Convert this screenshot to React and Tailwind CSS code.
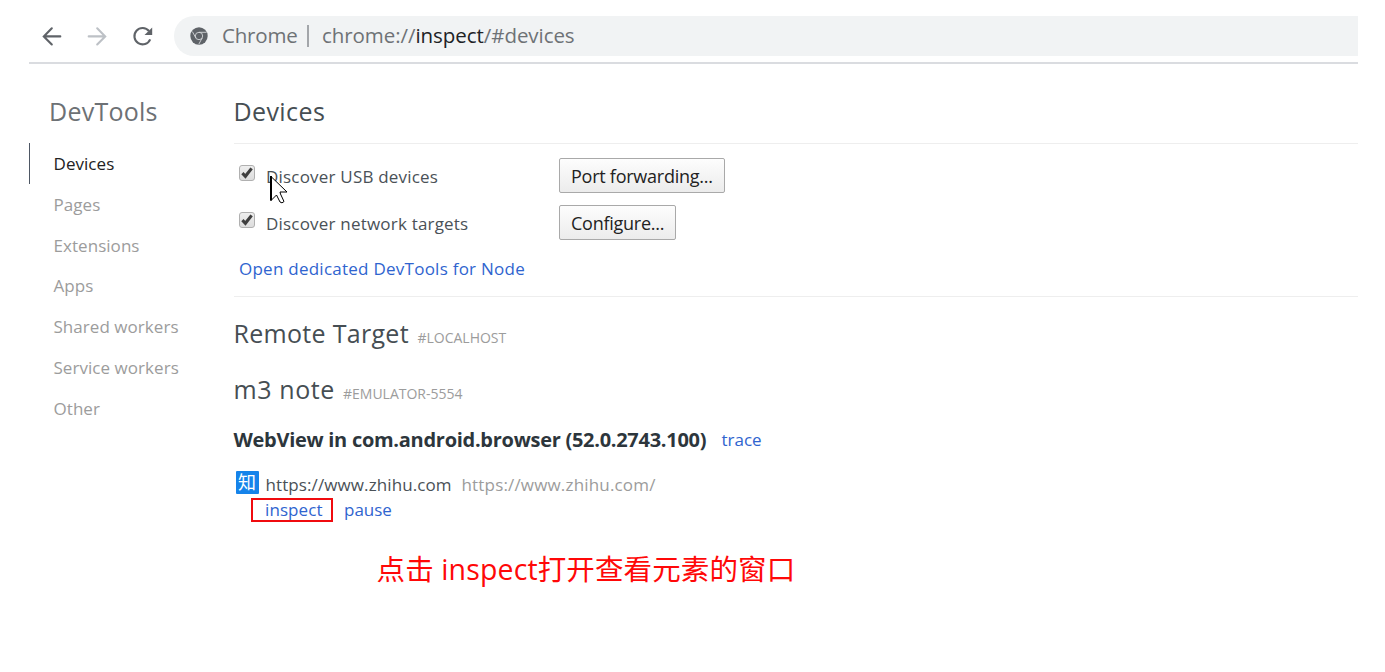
import React, { useState } from 'react'

const tabs = ['Devices', 'Pages', 'Extensions', 'Apps', 'Shared workers', 'Service workers', 'Other']

function ChromeLogo() {
  return (
    <svg viewBox="0 0 18 18" className="ml-[16px] h-[18px] w-[18px]">
      <circle cx="9" cy="9" r="8.7" fill="#5f6368" />
      <g fill="none" stroke="#d5d7d9" strokeWidth="0.9">
        <circle cx="9" cy="9" r="3.7" />
        <path d="M9 5.3h7.600M5.8 10.9L2.400 4.6M12.2 10.9L8.800 17.2" />
      </g>
    </svg>
  )
}

function AddressBar() {
  return (
    <header className="ml-[29px] mr-[27px] flex h-[64px] items-start border-b-2 border-[#dadce0] pt-[16px]">
      <div className="flex h-[40px] w-[145px] shrink-0 items-center pl-[13px]">
        <svg viewBox="0 0 20 20" className="h-[20px] w-[20px]" fill="none" stroke="#5f6368" strokeWidth="2.1" strokeLinecap="round">
          <path d="M18.3 10.400H2.4M9.8 2.3L1.8 10.4l8 8.1" />
        </svg>
        <svg viewBox="0 0 20 20" className="ml-[25px] h-[20px] w-[20px]" fill="none" stroke="#bdc1c6" strokeWidth="2.1" strokeLinecap="round">
          <path d="M1.7 10.4h15.9M10.2 2.3l8 8.1-8 8.1" />
        </svg>
        <svg viewBox="0 0 22 22" className="ml-[25px] h-[22px] w-[22px]">
          <path d="M18.2 14.3A8.2 8.2 0 1 1 17 6" fill="none" stroke="#5f6368" strokeWidth="2.1" />
          <path d="M20.2 2.4v7.700h-7.700z" fill="#5f6368" />
        </svg>
      </div>
      <div className="flex h-[40px] flex-1 items-center rounded-l-full bg-[#f1f3f4] text-[20.5px] text-[#6e7276]">
        <ChromeLogo />
        <span className="-mt-px ml-[14px] w-[85px] tracking-[-0.2px]">Chrome</span>
        <span className="h-[22px] w-[2px] bg-[#a3a6aa]" />
        <span className="-mt-px ml-[13px] tracking-[-0.06px]">
          chrome://<span className="text-[#202124]">inspect</span>/#devices
        </span>
      </div>
    </header>
  )
}

function Checkbox({ checked, onChange, label }) {
  return (
    <label className="flex w-[320px] items-center">
      <input type="checkbox" className="sr-only" checked={checked} onChange={onChange} />
      <span className="-mt-[5px] flex h-[16px] w-[16px] items-center justify-center rounded-[3px] border border-[#b0b0b0] bg-linear-to-b from-[#eeeeee] to-[#dddddd]">
        {checked && (
          <svg viewBox="0 0 14 14" className="h-[14px] w-[14px]" fill="none" stroke="#3f3f3f" strokeWidth="3.1">
            <path d="M2.4 7.2l3 3.1L11.6 2.4" />
          </svg>
        )}
      </span>
      <span className="ml-[11px] mt-[3px] tracking-[0.2px]">{label}</span>
    </label>
  )
}

function Button({ children }) {
  return (
    <button className="h-[35px] rounded-[2px] border border-[#a9a9a9] bg-linear-to-b from-[#fdfdfd] to-[#ececec] px-[11px] pt-[2px] text-[18px] tracking-[-0.25px] text-[#222]">
      {children}
    </button>
  )
}

function Cursor() {
  return (
    <svg viewBox="0 0 18 29" className="absolute left-[36px] top-[31px] h-[29px] w-[18px]">
      <path d="M1 1.500v24l5.500-5.500 3.500 7q2 2 4-.5L10.500 19l-.5-2h7z" fill="#fff" stroke="#000" strokeWidth="1" />
      <path d="M1 1v24.500" stroke="#000" strokeWidth="2" />
    </svg>
  )
}

export default function App() {
  const [active, setActive] = useState('Devices')
  const [usb, setUsb] = useState(true)
  const [network, setNetwork] = useState(true)

  return (
    <div className="h-[672px] w-[1385px] overflow-hidden bg-white font-['Open_Sans','Noto_Sans_CJK_SC',sans-serif] text-[17px] text-[#4a5157]">
      <AddressBar />

      <div className="flex pl-[29px] pr-[27px]">
        <nav className="w-[204.5px] shrink-0">
          <h1 className="h-[79px] pl-[20px] pt-[30px] text-[25px] leading-[34px] tracking-[0.25px] text-[#6d7175]">DevTools</h1>
          {tabs.map(tab => (
            <button
              key={tab}
              onClick={() => setActive(tab)}
              className={`block h-[40.75px] w-full border-l pl-[23.5px] pt-px text-left tracking-[0.05px] ${
                tab === active ? 'border-[#4e5764] text-[#222]' : 'border-transparent text-[#9c9c9c]'
              }`}
            >
              {tab}
            </button>
          ))}
        </nav>

        <main className="min-w-0 flex-1">
          <h2 className="h-[80px] border-b border-[#eeeeee] pt-[30px] text-[25px] leading-[34px] tracking-[0.4px] text-[#464e53]">Devices</h2>

          <section className="relative h-[153px] border-b border-[#eeeeee] pl-[5.5px] pt-[14px]">
            <div className="flex h-[35px] items-center">
              <Checkbox checked={usb} onChange={() => setUsb(!usb)} label="Discover USB devices" />
              <Button>Port forwarding...</Button>
            </div>
            <div className="mt-[12px] flex h-[35px] items-center">
              <Checkbox checked={network} onChange={() => setNetwork(!network)} label="Discover network targets" />
              <Button>Configure...</Button>
            </div>
            <a className="mt-[17px] block leading-[24px] tracking-[0.25px] text-[#2f64cf]">Open dedicated DevTools for Node</a>
            <Cursor />
          </section>

          <div className="mt-[19px] flex h-[34px] items-baseline text-[25px] leading-[34px] tracking-[0.3px] text-[#464e53]">
            Remote Target
            <span className="ml-[8.5px] text-[14px] tracking-normal text-[#9c9c9c]">#LOCALHOST</span>
          </div>
          <div className="mt-[22px] flex h-[34px] items-baseline text-[25px] leading-[34px] tracking-[0.6px] text-[#464e53]">
            m3 note
            <span className="ml-[8px] text-[14px] tracking-normal text-[#9c9c9c]">#EMULATOR-5554</span>
          </div>
          <div className="mt-[21px] flex h-[26px] items-baseline leading-[26px]">
            <b className="w-[488px] whitespace-nowrap text-[20px] font-bold tracking-[-0.28px] text-[#2d363c]">WebView in com.android.browser (52.0.2743.100)</b>
            <a className="relative -top-px text-[#2f64cf]">trace</a>
          </div>

          <div className="mt-[17px] flex h-[24px] items-start leading-[26px]">
            <span className="ml-[2px] mt-px flex h-[23px] w-[23px] items-center justify-center rounded-[1px] bg-[#1583ea] pb-px text-[18px] leading-none text-white">知</span>
            <span className="ml-[7px] mt-[2px] w-[196px] tracking-[0.1px] text-[#4a5157]">https://www.zhihu.com</span>
            <span className="mt-[2px] tracking-[0.17px] text-[#9c9c9c]">https://www.zhihu.com/</span>
          </div>
          <div className="ml-[17.5px] mt-[4px] flex h-[24px] items-center text-[#2f64cf]">
            <a className="flex h-[24px] w-[82px] items-center border-2 border-[#f00b0f] pl-[12px] tracking-[0.1px]">inspect</a>
            <a className="ml-[11px]">pause</a>
          </div>

          <p className="ml-[143px] mt-[27px] text-[28.5px] leading-[40px] tracking-[0.13px] text-[#ff0808]">点击 inspect打开查看元素的窗口</p>
        </main>
      </div>
    </div>
  )
}
